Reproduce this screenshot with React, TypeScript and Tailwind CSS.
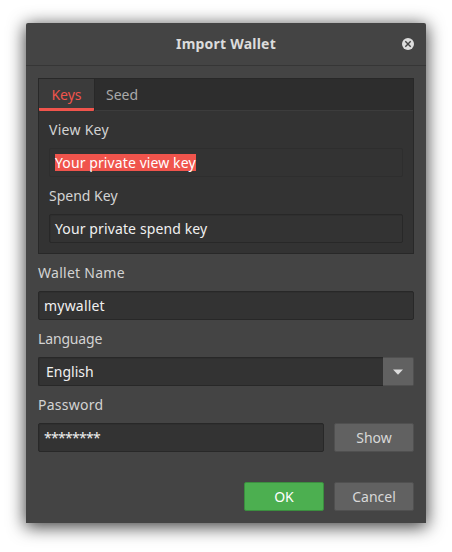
import type { ReactNode } from "react";

function Label({ children, className = "" }: { children: ReactNode; className?: string }) {
  return <div className={`flex h-[21px] items-center whitespace-nowrap text-[#d3d3d3] ${className}`}>{children}</div>;
}

function Entry({ children, className = "" }: { children: ReactNode; className?: string }) {
  return (
    <div
      className={`flex h-[29px] items-center whitespace-nowrap rounded-[2px] border border-[#282828] bg-[#333333] px-[5px] text-[#f0f0f0] shadow-[inset_1px_1px_0_#2f2f2f] ${className}`}
    >
      {children}
    </div>
  );
}

function Button({ children, className }: { children: ReactNode; className: string }) {
  return (
    <button type="button" className={`flex h-[29px] w-20 items-center justify-center rounded-[2px] border ${className}`}>
      {children}
    </button>
  );
}

export default function App() {
  return (
    <div className="h-[552px] w-[452px] overflow-hidden bg-white pt-[23px] pl-[26px] font-['Noto_Sans',sans-serif] text-[14px] leading-[17px]">
      <div className="flex h-[500px] w-[400px] flex-col rounded-t-[2px] bg-[#444444] shadow-[0_3px_17px_1px_rgba(0,0,0,0.75)]">
        <header className="grid h-[43px] shrink-0 grid-cols-[1fr_auto_1fr] items-center border-b border-[#363636] px-3">
          <span />
          <h1 className="pb-px font-bold tracking-[0.22px] text-[#dcdcdc]">Import Wallet</h1>
          <button type="button" aria-label="Close" className="justify-self-end">
            <svg width="12" height="12" viewBox="0 0 12 12" className="block">
              <circle cx="6" cy="6" r="6" fill="#dddddd" />
              <path d="M3.3 3.3 8.7 8.7M8.7 3.3 3.3 8.7" stroke="#444444" strokeWidth="1.4" />
            </svg>
          </button>
        </header>

        <main className="flex flex-col px-3 pt-3">
          <section className="h-[176px] border border-[#282828] bg-[#333333]">
            <div className="flex h-8 border-b border-[#3c3c3c] bg-[#2d2d2d]">
              <div className="flex h-8 w-[55px] shrink-0 items-center justify-center rounded-b-[1px] border-b-[3px] border-[#f0544c] bg-[#3b3b3b] pt-px text-[#f0544c]">
                Keys
              </div>
              <div className="flex h-8 w-[55px] items-center justify-center border-l border-[#282828] pb-px text-[#a9a9a9]">Seed</div>
            </div>
            <div className="px-[10px] pt-2">
              <Label className="tracking-[0.28px]">View Key</Label>
              <Entry className="mt-2 border-[#2e2e2e]! shadow-none!">
                <span className="bg-[#f0544c] tracking-[0.1px] text-white">Your private view key</span>
              </Entry>
              <Label className="mt-2">Spend Key</Label>
              <Entry className="mt-2 tracking-[0.12px]">Your private spend key</Entry>
            </div>
          </section>

          <Label className="mt-2 tracking-[0.27px]">Wallet Name</Label>
          <Entry className="mt-2 tracking-[0.2px]">mywallet</Entry>

          <Label className="mt-2 tracking-[-0.15px]">Language</Label>
          <div className="mt-2 flex">
            <Entry className="w-[345px] rounded-r-none border-r-0 pl-[7px]!">English</Entry>
            <button
              type="button"
              aria-label="Open language list"
              className="flex h-[29px] w-[31px] items-center justify-center rounded-r-[2px] border border-l-0 border-[#505050] bg-[#616161]"
            >
              <svg width="10" height="6" viewBox="0 0 10 6" className="block">
                <path d="M0 .5h10L5 5.8z" fill="#dcdcdc" />
              </svg>
            </button>
          </div>

          <Label className="mt-2 tracking-[0.25px]">Password</Label>
          <div className="mt-2 flex gap-[10px]">
            <Entry className="w-[286px] tracking-[-0.72px]">********</Entry>
            <Button className="border-[#505050] bg-[#616161] text-[#d8d8d8]">Show</Button>
          </div>

          <div className="mt-[30px] flex justify-end gap-[10px]">
            <Button className="border-[#3b8e3f] bg-[#4caf50] text-white">OK</Button>
            <Button className="border-[#505050] bg-[#616161] text-[#d8d8d8]">Cancel</Button>
          </div>
        </main>
      </div>
    </div>
  );
}
